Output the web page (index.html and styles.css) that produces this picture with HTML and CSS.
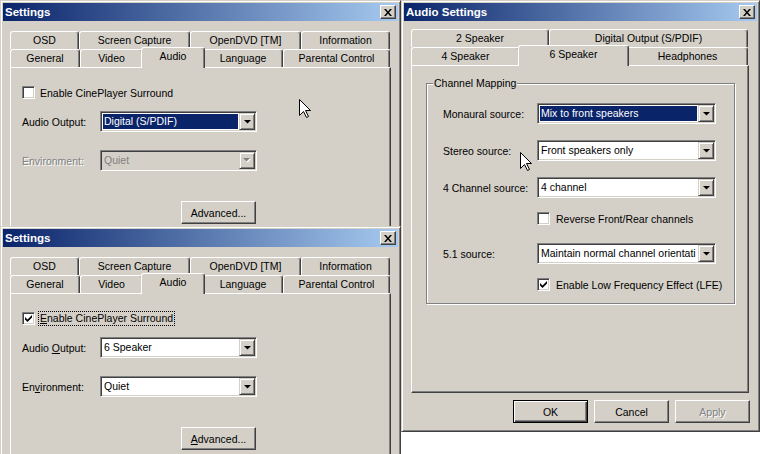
FILE: index.html
```html
<!DOCTYPE html>
<html>
<head>
<meta charset="utf-8">
<title>Settings</title>
<link rel="stylesheet" href="styles.css">
</head>
<body>
<div class="desktop">

  <section class="win win-top">
    <div class="titlebar"><span class="title">Settings</span><span class="close"><svg width="8" height="7" viewBox="0 0 8 7"><path d="M0 0h2l2 2.4L6 0h2L5 3.5 8 7H6L4 4.6 2 7H0l3-3.5z" fill="#000"/></svg></span></div>
    <div class="settings-body">
      <div class="tabs">
        <div class="tab-row">
          <div class="tab w-osd">OSD</div>
          <div class="tab w-cap">Screen Capture</div>
          <div class="tab w-odvd">OpenDVD [TM]</div>
          <div class="tab w-info">Information</div>
        </div>
        <div class="tab-row">
          <div class="tab w-gen">General</div>
          <div class="tab w-vid">Video</div>
          <div class="tab sel w-aud">Audio</div>
          <div class="tab w-lang">Language</div>
          <div class="tab w-par">Parental Control</div>
        </div>
      </div>
      <div class="panel settings-panel">
        <div class="settings-form">
          <div class="check-row"><span class="cb"></span><span class="check-label">Enable CinePlayer Surround</span></div>
          <div class="field-row f1">
            <span class="field-label">Audio Output:</span>
            <div class="combo focus"><span class="combo-text">Digital (S/PDIF)</span><span class="combo-btn"><svg width="7" height="4" viewBox="0 0 7 4"><polygon points="0,0 7,0 3.5,3.6" fill="#000"/></svg></span></div>
          </div>
          <div class="field-row f2">
            <span class="field-label disabled">Environment:</span>
            <div class="combo off"><span class="combo-text">Quiet</span><span class="combo-btn"><svg width="8" height="5" viewBox="0 0 8 5"><polygon points="1,1 8,1 4.5,4.6" fill="#fff"/><polygon points="0,0 7,0 3.5,3.6" fill="#808080"/></svg></span></div>
          </div>
          <div class="btn-row"><div class="btn">Advanced...</div></div>
        </div>
      </div>
    </div>
  </section>

  <section class="win win-bottom">
    <div class="titlebar"><span class="title">Settings</span><span class="close"><svg width="8" height="7" viewBox="0 0 8 7"><path d="M0 0h2l2 2.4L6 0h2L5 3.5 8 7H6L4 4.6 2 7H0l3-3.5z" fill="#000"/></svg></span></div>
    <div class="settings-body">
      <div class="tabs">
        <div class="tab-row">
          <div class="tab w-osd">OSD</div>
          <div class="tab w-cap">Screen Capture</div>
          <div class="tab w-odvd">OpenDVD [TM]</div>
          <div class="tab w-info">Information</div>
        </div>
        <div class="tab-row">
          <div class="tab w-gen">General</div>
          <div class="tab w-vid">Video</div>
          <div class="tab sel w-aud">Audio</div>
          <div class="tab w-lang">Language</div>
          <div class="tab w-par">Parental Control</div>
        </div>
      </div>
      <div class="panel settings-panel">
        <div class="settings-form">
          <div class="check-row"><span class="cb"><svg width="7" height="7" viewBox="0 0 7 7"><polygon points="0,2 2.5,4.5 7,0 7,2.6 2.5,7 0,4.6" fill="#000"/></svg></span><span class="check-label focused"><u>E</u>nable CinePlayer Surround</span></div>
          <div class="field-row f1">
            <span class="field-label">Audio <u>O</u>utput:</span>
            <div class="combo"><span class="combo-text">6 Speaker</span><span class="combo-btn"><svg width="7" height="4" viewBox="0 0 7 4"><polygon points="0,0 7,0 3.5,3.6" fill="#000"/></svg></span></div>
          </div>
          <div class="field-row f2">
            <span class="field-label">En<u>v</u>ironment:</span>
            <div class="combo"><span class="combo-text">Quiet</span><span class="combo-btn"><svg width="7" height="4" viewBox="0 0 7 4"><polygon points="0,0 7,0 3.5,3.6" fill="#000"/></svg></span></div>
          </div>
          <div class="btn-row"><div class="btn"><span><u>A</u>dvanced...</span></div></div>
        </div>
      </div>
    </div>
  </section>

  <section class="win win-audio">
    <div class="titlebar"><span class="title">Audio Settings</span><span class="close"><svg width="8" height="7" viewBox="0 0 8 7"><path d="M0 0h2l2 2.4L6 0h2L5 3.5 8 7H6L4 4.6 2 7H0l3-3.5z" fill="#000"/></svg></span></div>
    <div class="audio-body">
      <div class="tabs audio-tabs">
        <div class="tab-row">
          <div class="tab w-2sp">2 Speaker</div>
          <div class="tab w-dig">Digital Output (S/PDIF)</div>
        </div>
        <div class="tab-row">
          <div class="tab w-4sp">4 Speaker</div>
          <div class="tab sel w-6sp">6 Speaker</div>
          <div class="tab w-hp">Headphones</div>
        </div>
      </div>
      <div class="panel audio-panel">
        <div class="group">
          <span class="group-label">Channel Mapping</span>
          <div class="g-row">
            <span class="g-label">Monaural source:</span>
            <div class="combo wide focus"><span class="combo-text">Mix to front speakers</span><span class="combo-btn"><svg width="7" height="4" viewBox="0 0 7 4"><polygon points="0,0 7,0 3.5,3.6" fill="#000"/></svg></span></div>
          </div>
          <div class="g-row gap16">
            <span class="g-label">Stereo source:</span>
            <div class="combo wide"><span class="combo-text">Front speakers only</span><span class="combo-btn"><svg width="7" height="4" viewBox="0 0 7 4"><polygon points="0,0 7,0 3.5,3.6" fill="#000"/></svg></span></div>
          </div>
          <div class="g-row gap16">
            <span class="g-label">4 Channel source:</span>
            <div class="combo wide"><span class="combo-text">4 channel</span><span class="combo-btn"><svg width="7" height="4" viewBox="0 0 7 4"><polygon points="0,0 7,0 3.5,3.6" fill="#000"/></svg></span></div>
          </div>
          <div class="g-check gap14"><span class="cb"></span><span class="g-check-label">Reverse Front/Rear channels</span></div>
          <div class="g-row gap18">
            <span class="g-label">5.1 source:</span>
            <div class="combo wide"><span class="combo-text">Maintain normal channel orientati</span><span class="combo-btn"><svg width="7" height="4" viewBox="0 0 7 4"><polygon points="0,0 7,0 3.5,3.6" fill="#000"/></svg></span></div>
          </div>
          <div class="g-check gap14"><span class="cb"><svg width="7" height="7" viewBox="0 0 7 7"><polygon points="0,2 2.5,4.5 7,0 7,2.6 2.5,7 0,4.6" fill="#000"/></svg></span><span class="g-check-label">Enable Low Frequency Effect (LFE)</span></div>
        </div>
      </div>
      <div class="actions">
        <div class="btn default">OK</div>
        <div class="btn">Cancel</div>
        <div class="btn disabled">Apply</div>
      </div>
    </div>
  </section>

  <svg class="cursor cur1" width="13" height="20" viewBox="0 0 13 20"><path d="M0.5 0.5V16.5L4.5 12.5L7.5 18.5L9.5 17.5L6.5 11.5H11.5Z" fill="#fff" stroke="#000" stroke-width="1" stroke-linejoin="miter"/></svg>
  <svg class="cursor cur2" width="13" height="20" viewBox="0 0 13 20"><path d="M0.5 0.5V16.5L4.5 12.5L7.5 18.5L9.5 17.5L6.5 11.5H11.5Z" fill="#fff" stroke="#000" stroke-width="1" stroke-linejoin="miter"/></svg>
</div>
</body>
</html>
```

FILE: styles.css
```css
* { box-sizing: border-box; }
html, body { margin: 0; padding: 0; }
body {
  font-family: "Liberation Sans", Arial, sans-serif;
  font-size: 10.5px;
  color: #000;
  background: #fff;
}
.desktop {
  position: relative;
  width: 760px;
  height: 454px;
  overflow: hidden;
  background: #fff;
}

/* windows */
.win {
  position: absolute;
  display: flex;
  flex-direction: column;
  background: #d4d0c8;
  border: 1px solid;
  border-color: #d4d0c8 #404040 #404040 #d4d0c8;
  box-shadow: inset 1px 1px #fff, inset -1px -1px #808080;
  padding: 2px;
}
.win-top { left: 0; top: 0; width: 401px; height: 280px; }
.win-bottom { left: 0; top: 226px; width: 401px; height: 260px; }
.win-audio { left: 401px; top: 0; width: 359px; height: 432px; }

.titlebar {
  flex: none;
  display: flex;
  align-items: center;
  height: 18px;
  padding: 0 2px 0 2px;
  background: linear-gradient(90deg, #0a246a 0%, #a6caf0 100%);
  color: #fff;
  font-weight: bold;
  font-size: 11.5px;
}
.title { flex: 1; }
.close {
  width: 16px;
  height: 14px;
  display: flex;
  align-items: center;
  justify-content: center;
  background: #d4d0c8;
  border: 1px solid;
  border-color: #fff #404040 #404040 #fff;
  box-shadow: inset -1px -1px #808080;
}

/* tabs */
.tab-row {
  display: flex;
  align-items: flex-start;
  height: 18px;
}
.tab {
  flex: none;
  height: 18px;
  background: #d4d0c8;
  border-top: 1px solid #fff;
  border-left: 1px solid #fff;
  border-right: 1px solid #404040;
  box-shadow: inset -1px 0 #808080;
  border-radius: 3px 3px 0 0;
  text-align: center;
  line-height: 17px;
  white-space: nowrap;
}
.tab.sel {
  position: relative;
  z-index: 2;
  height: 21px;
  margin: -2px -2px 0 -2px;
  line-height: 17px;
}
.w-osd { width: 69px; }
.w-cap { width: 111px; }
.w-odvd { width: 111px; }
.w-info { width: 89px; }
.w-gen { width: 70px; }
.w-vid { width: 63px; }
.w-aud { width: 64px; }
.w-lang { width: 80px; }
.w-par { width: 107px; }
.w-2sp { width: 138px; }
.w-dig { width: 199px; }
.w-4sp { width: 109px; }
.w-6sp { width: 111px; }
.w-hp { width: 121px; }

.panel {
  border: 1px solid;
  border-color: #fff #404040 #404040 #fff;
  box-shadow: inset -1px -1px #808080;
  background: #d4d0c8;
}

/* settings window */
.settings-body {
  flex: 1;
  display: flex;
  flex-direction: column;
  padding: 10px 0 0 7px;
}
.tabs { width: 380px; }
.settings-panel {
  flex: 1;
  width: 381px;
  padding: 18px 0 0 11px;
}
.settings-form {
  display: flex;
  flex-direction: column;
  width: 235px;
}
.check-row {
  display: flex;
  align-items: center;
  height: 13px;
}
.check-label { margin-left: 5px; white-space: nowrap; }
.check-label.focused {
  margin: -1px 0 -1px 3px;
  padding: 0 1px;
  border: 1px dotted #000;
  line-height: 13px;
}
.field-row {
  display: flex;
  align-items: center;
  height: 21px;
}
.f1 { margin-top: 12px; }
.f2 { margin-top: 18px; }
.field-label { width: 78px; white-space: nowrap; }
.field-label.disabled { color: #808080; text-shadow: 1px 1px 0 #fff; }
.btn-row {
  display: flex;
  justify-content: flex-end;
  margin-top: 30px;
  padding-right: 1px;
}

/* controls */
.cb {
  flex: none;
  width: 13px;
  height: 13px;
  display: flex;
  align-items: center;
  justify-content: center;
  background: #fff;
  border: 1px solid;
  border-color: #808080 #fff #fff #808080;
  box-shadow: inset 1px 1px #404040, inset -1px -1px #d4d0c8;
}
.combo {
  flex: none;
  display: flex;
  width: 157px;
  height: 21px;
  padding: 1px;
  background: #fff;
  border: 1px solid;
  border-color: #808080 #fff #fff #808080;
  box-shadow: inset 1px 1px #404040, inset -1px -1px #d4d0c8;
}
.combo.wide { width: 179px; }
.combo-text {
  flex: 1;
  min-width: 0;
  margin: 1px 0 1px 1px;
  padding-left: 1px;
  line-height: 15px;
  white-space: nowrap;
  overflow: hidden;
}
.combo.focus .combo-text { background: #0a246a; color: #fff; margin-right: 1px; }
.combo.off { background: #d4d0c8; }
.combo.off .combo-text { color: #808080; }
.combo-btn {
  flex: none;
  width: 16px;
  height: 17px;
  display: flex;
  align-items: center;
  justify-content: center;
  background: #d4d0c8;
  border: 1px solid;
  border-color: #d4d0c8 #404040 #404040 #d4d0c8;
  box-shadow: inset 1px 1px #fff, inset -1px -1px #808080;
}
.btn {
  flex: none;
  width: 75px;
  height: 23px;
  display: flex;
  align-items: center;
  justify-content: center;
  background: #d4d0c8;
  border: 1px solid;
  border-color: #fff #404040 #404040 #fff;
  box-shadow: inset -1px -1px #808080;
}
.btn.default {
  border-color: #000;
  box-shadow: inset 1px 1px #fff, inset -1px -1px #404040, inset -2px -2px #808080;
}
.btn.disabled { color: #808080; text-shadow: 1px 1px 0 #fff; }

/* audio window */
.audio-body {
  display: flex;
  flex-direction: column;
  padding: 8px 0 0 7px;
}
.audio-tabs { width: 337px; }
.audio-panel {
  width: 338px;
  height: 328px;
  padding: 17px 0 0 14px;
}
.group {
  position: relative;
  width: 309px;
  padding: 19px 0 12px 16px;
  border: 1px solid #808080;
  box-shadow: 1px 1px 0 #fff, inset 1px 1px 0 #fff;
}
.group-label {
  position: absolute;
  top: -7px;
  left: 6px;
  padding: 0 1px;
  line-height: 13px;
  background: #d4d0c8;
}
.g-row {
  display: flex;
  align-items: center;
  height: 21px;
}
.g-label { width: 94px; white-space: nowrap; }
.g-check {
  display: flex;
  align-items: center;
  height: 13px;
  padding-left: 94px;
}
.g-check-label { margin-left: 6px; white-space: nowrap; }
.gap14 { margin-top: 14px; }
.gap16 { margin-top: 16px; }
.gap18 { margin-top: 18px; }
.actions {
  display: flex;
  justify-content: flex-end;
  gap: 6px;
  width: 339px;
  margin-top: 7px;
}

.cursor { position: absolute; z-index: 10; }
.cur1 { left: 299px; top: 99px; }
.cur2 { left: 520px; top: 152px; }
```
